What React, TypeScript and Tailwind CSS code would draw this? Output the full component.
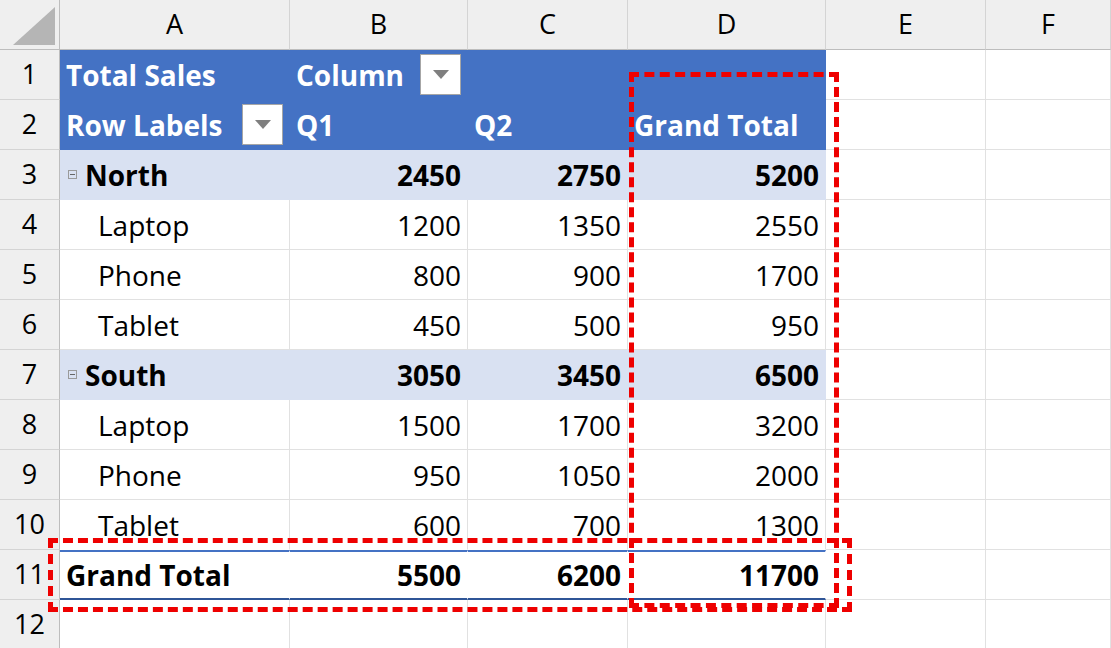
import React from "react";

const cols = ["A", "B", "C", "D", "E", "F"];
const widths = "60px 230px 178px 160px 198px 160px 125px";

type Cell = { t?: string; b?: boolean; right?: boolean; bg?: string; white?: boolean; indent?: boolean; dd?: boolean; minus?: boolean; gt?: boolean };

const Dd = () => (
  <span className="inline-flex w-[41px] h-[41px] bg-white border border-[#a6a6a6] items-center justify-center">
    <svg width="16" height="9" viewBox="0 0 16 9"><path d="M0 0h16L8 9z" fill="#7f7f7f" /></svg>
  </span>
);

const blue = "bg-[#4472c4]";
const lite = "bg-[#d9e1f2]";

function row(n: number): Cell[] {
  const data: Record<number, Cell[]> = {
    1: [{ t: "Total Sales", bg: blue, white: true, b: true }, { t: "Column", bg: blue, white: true, b: true, dd: true }, { bg: blue }, { bg: blue }],
    2: [{ t: "Row Labels", bg: blue, white: true, b: true, dd: true }, { t: "Q1", bg: blue, white: true, b: true }, { t: "Q2", bg: blue, white: true, b: true }, { t: "Grand Total", bg: blue, white: true, b: true }],
    3: [{ t: "North", b: true, minus: true, bg: lite }, { t: "2450", b: true, right: true, bg: lite }, { t: "2750", b: true, right: true, bg: lite }, { t: "5200", b: true, right: true, bg: lite }],
    4: [{ t: "Laptop", indent: true }, { t: "1200", right: true }, { t: "1350", right: true }, { t: "2550", right: true }],
    5: [{ t: "Phone", indent: true }, { t: "800", right: true }, { t: "900", right: true }, { t: "1700", right: true }],
    6: [{ t: "Tablet", indent: true }, { t: "450", right: true }, { t: "500", right: true }, { t: "950", right: true }],
    7: [{ t: "South", b: true, minus: true, bg: lite }, { t: "3050", b: true, right: true, bg: lite }, { t: "3450", b: true, right: true, bg: lite }, { t: "6500", b: true, right: true, bg: lite }],
    8: [{ t: "Laptop", indent: true }, { t: "1500", right: true }, { t: "1700", right: true }, { t: "3200", right: true }],
    9: [{ t: "Phone", indent: true }, { t: "950", right: true }, { t: "1050", right: true }, { t: "2000", right: true }],
    10: [{ t: "Tablet", indent: true }, { t: "600", right: true }, { t: "700", right: true }, { t: "1300", right: true }],
    11: [{ t: "Grand Total", b: true, gt: true }, { t: "5500", b: true, right: true, gt: true }, { t: "6200", b: true, right: true, gt: true }, { t: "11700", b: true, right: true, gt: true }],
  };
  const r = data[n] || [];
  while (r.length < 6) r.push({});
  return r;
}

export default function App() {
  return (
    <div className="relative w-[1111px] h-[648px] overflow-hidden bg-white text-black" style={{ fontFamily: "'Open Sans', sans-serif" }}>
      <div className="grid" style={{ gridTemplateColumns: widths, gridAutoRows: "50px" }}>
        <div className="bg-[#efefef] border-r border-b border-[#bdbdbd] relative">
          <svg className="absolute right-[4px] bottom-[4px]" width="42" height="38"><path d="M42 0V38H0z" fill="#b5b5b5" /></svg>
        </div>
        {cols.map((c) => (
          <div key={c} className="bg-[#efefef] border-r border-b border-[#bdbdbd] border-r-[#d4d4d4] flex items-center justify-center text-[27px]">{c}</div>
        ))}
        {Array.from({ length: 12 }, (_, i) => i + 1).map((n) => (
          <React.Fragment key={n}>
            <div className="bg-[#efefef] border-r border-[#bdbdbd] border-b border-b-[#d4d4d4] flex items-center justify-center text-[27px]">{n}</div>
            {row(n).map((c, j) => (
              <div
                key={j}
                className={`flex items-center px-[6px] text-[28px] leading-none whitespace-nowrap border-r border-b ${c.bg ? c.bg + " border-transparent" : "border-[#e1e1e1]"} ${c.right ? "justify-end" : c.dd ? "justify-between" : ""} ${c.b ? "font-bold" : ""} ${c.white ? "text-white" : ""} ${c.gt ? "border-t-2 border-t-[#4472c4] border-b-2 border-b-[#2f5597] border-r-transparent" : ""} ${n === 10 && j < 4 ? "border-b-transparent" : ""}`}
              >
                {c.minus && <span className="inline-flex w-[9px] h-[9px] border border-[#9a9a9a] items-center justify-center mr-[8px] ml-[2px]"><span className="w-[5px] h-px bg-[#666]" /></span>}
                {c.indent && <span className="w-[32px]" />}
                {c.t && <span className={c.dd && j === 0 ? "" : ""}>{c.t}</span>}
                {c.dd && <span className={j === 0 ? "ml-[8px]" : "ml-[8px]"}><Dd /></span>}
              </div>
            ))}
          </React.Fragment>
        ))}
      </div>
      <div className="absolute left-[629px] top-[72px] w-[210px] h-[536px] border-[5px] border-dashed border-[#ee0000]" />
      <div className="absolute left-[48px] top-[538px] w-[804px] h-[74px] border-[5px] border-dashed border-[#ee0000]" />
    </div>
  );
}
